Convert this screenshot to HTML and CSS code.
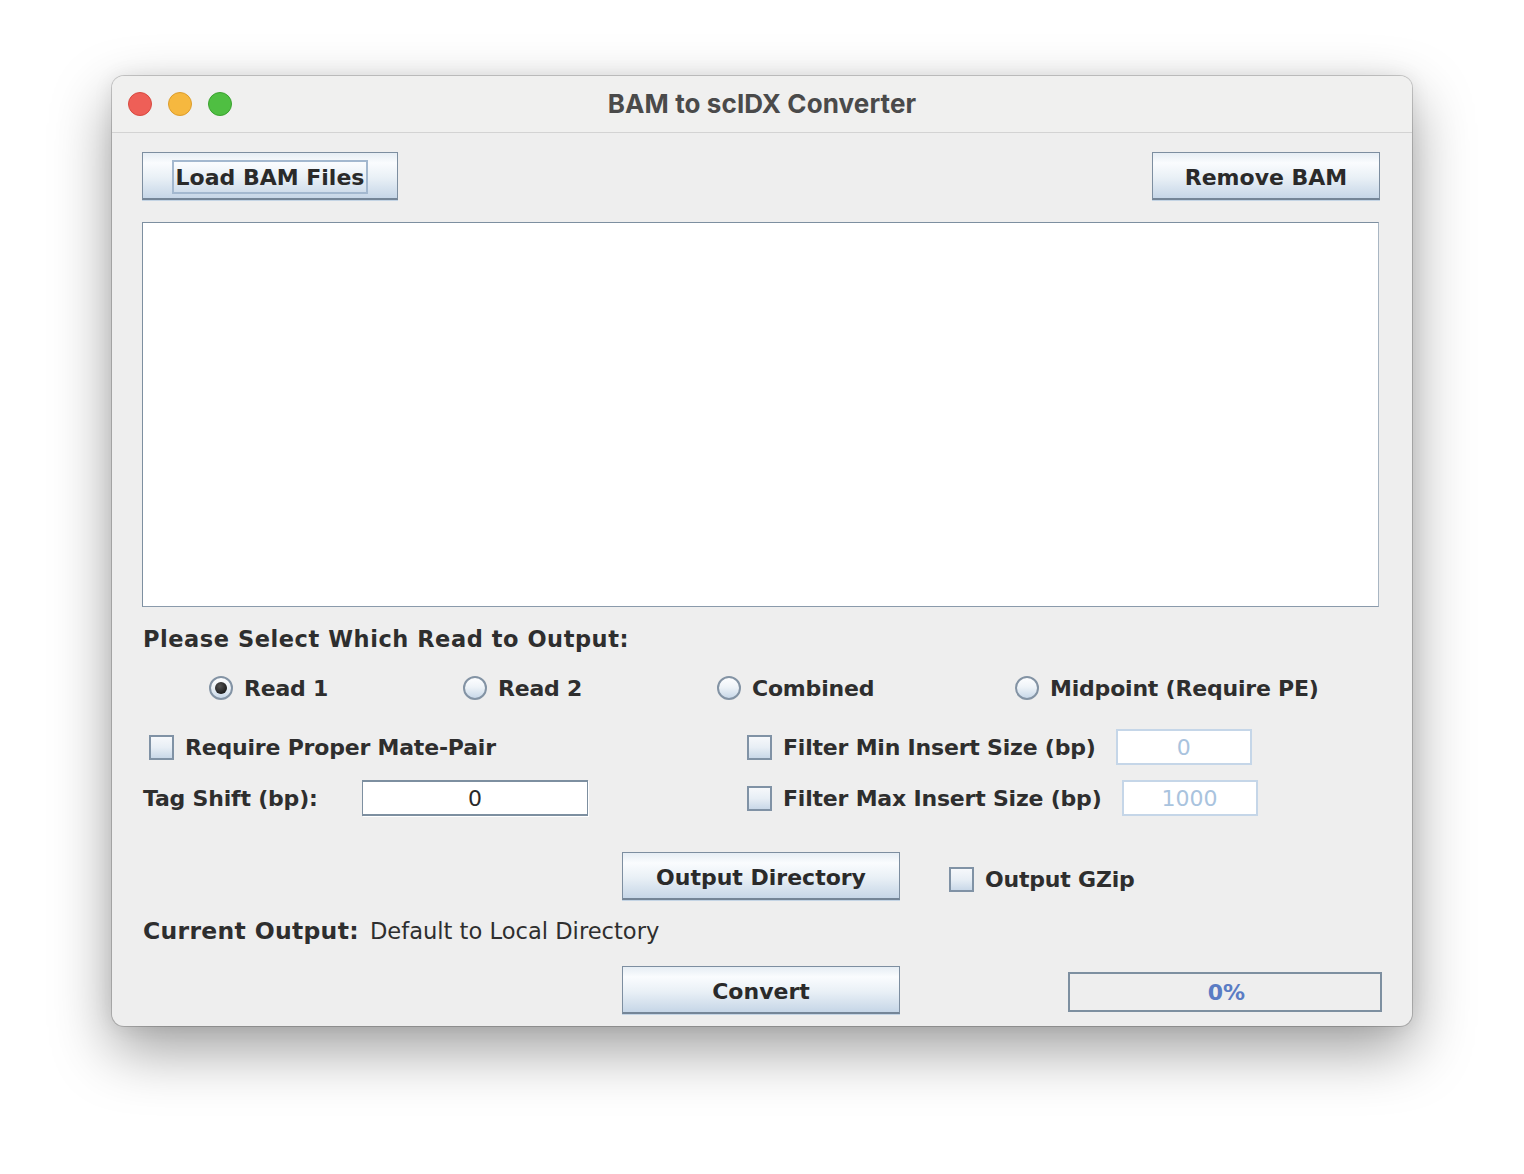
FILE: index.html
```html
<!DOCTYPE html>
<html>
<head>
<meta charset="utf-8">
<link rel="stylesheet" href="styles.css">
</head>
<body>
<div class="window">
  <div class="titlebar">
    <div class="lights">
      <span class="light red"></span>
      <span class="light yellow"></span>
      <span class="light green"></span>
    </div>
    <div class="title">BAM to scIDX Converter</div>
    <div></div>
  </div>
  <div class="content">
    <div class="row-top">
      <button class="btn btn-load"><span class="focus">Load BAM Files</span></button>
      <button class="btn btn-remove">Remove BAM</button>
    </div>
    <div class="list"></div>
    <div class="section-label">Please Select Which Read to Output:</div>
    <div class="radios">
      <label class="radio-item w1"><span class="radio checked"></span>Read 1</label>
      <label class="radio-item w1"><span class="radio"></span>Read 2</label>
      <label class="radio-item w2"><span class="radio"></span>Combined</label>
      <label class="radio-item"><span class="radio"></span>Midpoint (Require PE)</label>
    </div>
    <div class="opt-row row-a">
      <div class="col-left">
        <label class="check-item indent"><span class="check"></span>Require Proper Mate-Pair</label>
      </div>
      <div class="col-right">
        <label class="check-item"><span class="check"></span>Filter Min Insert Size (bp)</label>
        <div class="field disabled">0</div>
      </div>
    </div>
    <div class="opt-row row-b">
      <div class="col-left">
        <span class="label">Tag Shift (bp):</span>
        <div class="field tag">0</div>
      </div>
      <div class="col-right">
        <label class="check-item"><span class="check"></span>Filter Max Insert Size (bp)</label>
        <div class="field disabled">1000</div>
      </div>
    </div>
    <div class="out-row">
      <button class="btn btn-wide">Output Directory</button>
      <label class="check-item gzip"><span class="check"></span>Output GZip</label>
    </div>
    <div class="current"><span class="bold">Current Output:</span><span class="reg">Default to Local Directory</span></div>
    <div class="convert-row">
      <button class="btn btn-wide">Convert</button>
      <div class="progress">0%</div>
    </div>
  </div>
</div>
</body>
</html>
```

FILE: styles.css
```css
* { box-sizing: border-box; }
html, body { margin: 0; padding: 0; }
body {
  background: #ffffff;
  width: 1524px;
  height: 1174px;
  overflow: hidden;
  font-family: "DejaVu Sans", "Liberation Sans", sans-serif;
  color: #2e2e2e;
}
.window {
  margin: 76px 0 0 112px;
  width: 1300px;
  height: 950px;
  border-radius: 12px;
  background: #eeeeee;
  box-shadow: 0 0 0 1px rgba(0,0,0,0.18), 0 24px 60px rgba(0,0,0,0.38), 0 0 20px rgba(0,0,0,0.08);
  overflow: hidden;
}
.titlebar {
  height: 57px;
  background: #f0f0ef;
  border-bottom: 1px solid #d3d3d3;
  display: grid;
  grid-template-columns: 1fr auto 1fr;
  align-items: center;
}
.lights { display: flex; gap: 16px; padding-left: 16px; }
.light {
  width: 24px; height: 24px; border-radius: 50%;
  display: block;
}
.red { background: #ee5f57; border: 1px solid #d8493f; }
.yellow { background: #f6b83f; border: 1px solid #dd9d2b; }
.green { background: #4fbf42; border: 1px solid #3aa22f; }
.title {
  font-family: "Inter", "Liberation Sans", sans-serif;
  font-weight: 700;
  font-size: 26px;
  color: #4a4a4a;
  letter-spacing: 0.1px;
  padding-bottom: 2px;
}
.content { padding: 19px 32px 0 30px; }
.btn {
  font-family: "DejaVu Sans", "Liberation Sans", sans-serif;
  font-weight: 700;
  font-size: 22px;
  color: #2a2a2a;
  height: 48px;
  flex-shrink: 0;
  border: 1px solid #7d8ea0;
  border-bottom: 2px solid #748597;
  box-shadow: 0 1px 0 #c4d4e4;
  background: linear-gradient(to bottom, #e6edf4 0%, #fafcfe 22%, #e9f0f6 55%, #c6d6e7 100%);
  padding: 4px 0 0 0;
  margin: 0;
  display: flex;
  align-items: center;
  justify-content: center;
}
.row-top { display: flex; justify-content: space-between; }
.btn-load { width: 256px; padding-top: 2px; }
.btn-remove { width: 228px; }
.focus {
  border: 2px solid #a3b8cf;
  padding: 2px 2px 0 2px;
  height: 34px;
  display: flex; align-items: center;
}
.list {
  margin-top: 22px;
  width: 1237px;
  height: 385px;
  background: #ffffff;
  border: 1px solid #7d8fa0;
  border-right-color: #a9b6c3;
  border-bottom-color: #8a9aab;
}
.section-label {
  height: 61px;
  display: flex; align-items: center;
  font-weight: 700; font-size: 22.5px;
  letter-spacing: 0.55px;
  padding-left: 1px;
  padding-top: 2px;
}
.radios {
  height: 40px;
  display: flex; align-items: center;
  padding-left: 67px;
}
.radio-item {
  display: flex; align-items: center; gap: 11px;
  font-weight: 700; font-size: 22px;
  letter-spacing: -0.2px;
  flex-shrink: 0;
}
.w1 { width: 254px; }
.w2 { width: 298px; }
.radio {
  width: 24px; height: 24px; border-radius: 50%;
  border: 2px solid #8393a4;
  background: linear-gradient(to bottom, #fdfeff 0%, #eef3f8 45%, #c8d8e8 100%);
  display: flex; align-items: center; justify-content: center;
}
.radio.checked::after {
  content: "";
  width: 12px; height: 12px; border-radius: 50%;
  background: radial-gradient(circle at 40% 35%, #555 0%, #1e1e1e 70%);
}
.opt-row { display: flex; height: 36px; align-items: center; }
.row-a { margin-top: 21px; }
.row-b { margin-top: 15px; }
.col-left { width: 605px; flex-shrink: 0; display: flex; align-items: center; }
.col-right { display: flex; align-items: center; gap: 20px; }
.check-item {
  display: flex; align-items: center; gap: 11px;
  font-weight: 700; font-size: 22px;
  letter-spacing: -0.2px;
  flex-shrink: 0;
}
.indent { padding-left: 7px; }
.check {
  width: 25px; height: 25px;
  border: 2px solid #8092a5;
  background: linear-gradient(to bottom, #f6f8fb 0%, #e7eef5 50%, #c9d8e8 100%);
}
.label { font-weight: 700; font-size: 22px; width: 220px; flex-shrink: 0; padding-left: 1px; letter-spacing: -0.2px; }
.field {
  height: 36px;
  flex-shrink: 0;
  display: flex; align-items: center; justify-content: center;
  font-size: 22px;
  background: #ffffff;
}
.field.disabled {
  width: 136px;
  border: 2px solid #c5d6e8;
  color: #a9c3de;
}
.field.tag {
  width: 226px;
  border: 1px solid #7d8fa0;
  border-top-width: 2px;
  border-bottom-width: 2px;
  color: #2a2a2a;
  box-shadow: 1px 1px 0 #ffffff;
}
.out-row {
  margin-top: 36px;
  display: flex; align-items: center;
  padding-left: 480px;
  height: 48px;
}
.btn-wide { width: 278px; }
.gzip { margin-left: 49px; margin-top: 6px; }
.current {
  margin-top: 18px;
  height: 26px;
  display: flex; align-items: center;
  padding-left: 1px;
  white-space: pre;
}
.bold { font-weight: 700; font-size: 23.5px; letter-spacing: 0.3px; }
.reg { font-size: 22.6px; margin-left: 11px; }
.convert-row {
  margin-top: 22px;
  display: flex; align-items: flex-start;
  padding-left: 480px;
  height: 48px;
}
.progress {
  margin-left: 168px;
  margin-top: 6px;
  flex-shrink: 0;
  width: 314px; height: 40px;
  border: 2px solid #7d8fa0;
  background: #eeeeee;
  display: flex; align-items: center; justify-content: center;
  color: #5a7cc4;
  font-weight: 700;
  font-size: 22px;
  padding-left: 3px;
}
```
